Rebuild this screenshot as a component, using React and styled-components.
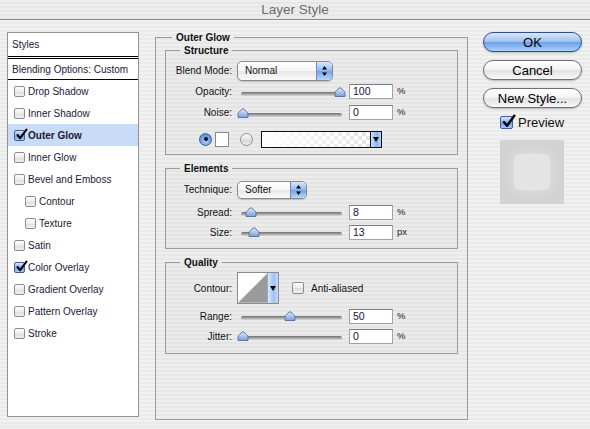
import React from "react";
import styled, { createGlobalStyle, css } from "styled-components";

const GlobalStyle = createGlobalStyle`
  html, body { margin: 0; padding: 0; }
  body {
    width: 590px;
    height: 429px;
    overflow: hidden;
    font-family: "Liberation Sans", Arial, sans-serif;
    font-size: 10px;
    color: #141420;
    background: repeating-linear-gradient(
      to bottom,
      #f1f1f1 0px,
      #f1f1f1 2px,
      #eaeaea 2px,
      #eaeaea 4px
    );
  }
`;

const styleItems = [
  { label: "Drop Shadow" },
  { label: "Inner Shadow" },
  { label: "Outer Glow", checked: true, active: true },
  { label: "Inner Glow" },
  { label: "Bevel and Emboss" },
  { label: "Contour", indent: 1 },
  { label: "Texture", indent: 1 },
  { label: "Satin" },
  { label: "Color Overlay", checked: true },
  { label: "Gradient Overlay" },
  { label: "Pattern Overlay" },
  { label: "Stroke" },
];

const Window = styled.div`
  width: 590px;
  height: 429px;
  display: flex;
  flex-direction: column;
`;

const TitleBar = styled.div`
  height: 19px;
  line-height: 19px;
  border-bottom: 1px solid #8e8e8e;
  text-align: center;
  font-size: 13.5px;
  color: #6c6c6c;
  background: repeating-linear-gradient(
    to bottom,
    #ededed 0px,
    #ededed 2px,
    #e6e6e6 2px,
    #e6e6e6 4px
  );
`;

const Content = styled.div`
  display: flex;
  align-items: flex-start;
`;

/* ---------- left styles list ---------- */

const StylesPanel = styled.div`
  box-sizing: border-box;
  margin: 12px 0 0 7px;
  width: 132px;
  height: 385px;
  border: 1px solid #939393;
  background: #fff;
  color: #1a1a36;
`;

const PanelHeader = styled.div`
  display: flex;
  align-items: center;
  padding-left: 4px;
  height: ${(p) => p.$h}px;
  border-bottom: ${(p) => (p.$double ? "3px double #000" : "1px solid #000")};
`;

const StyleRow = styled.div`
  display: flex;
  align-items: center;
  gap: 3px;
  height: 22px;
  padding-left: ${(p) => 6 + (p.$indent || 0) * 11}px;
  background: ${(p) => (p.$active ? "#c9dcf7" : "transparent")};
  font-weight: ${(p) => (p.$active ? "bold" : "normal")};
`;

const checkedBox = css`
  border-color: #3f5d97;
  background: linear-gradient(#d8e6fb, #8fb3ec 50%, #6b9be6 51%, #a9cdf7);
`;

const CheckBox = styled.span`
  position: relative;
  box-sizing: border-box;
  flex: none;
  width: ${(p) => p.$size || 11}px;
  height: ${(p) => p.$size || 11}px;
  border: 1px solid #8c8c8c;
  border-radius: 2px;
  background: linear-gradient(#fdfdfd, #ececec 50%, #dadada 51%, #f3f3f3);
  ${(p) => p.$checked && checkedBox}

  svg {
    position: absolute;
    left: 0px;
    top: -3px;
  }
`;

const Check = ({ size = 11 }) => (
  <svg width={size + 2} height={size + 2} viewBox="0 0 13 13">
    <path
      d="M2.5 7 L5.2 10.2 L11.5 1.5"
      fill="none"
      stroke="#000"
      strokeWidth="2.1"
      strokeLinecap="round"
      strokeLinejoin="round"
    />
  </svg>
);

/* ---------- group boxes ---------- */

const GroupBox = styled.fieldset`
  box-sizing: border-box;
  min-width: 0;
  margin: ${(p) => p.$mt || 0}px 0 0 ${(p) => p.$ml || 0}px;
  padding: ${(p) => p.$pt || 0}px ${(p) => p.$px || 0}px 0;
  width: ${(p) => (p.$w ? `${p.$w}px` : "auto")};
  height: ${(p) => p.$h}px;
  border: 1px solid #9b9b9b;
  background: rgba(0, 0, 0, 0.012);
`;

const Legend = styled.legend`
  margin-left: ${(p) => p.$ml}px;
  padding: 0 4px;
  line-height: 13px;
  font-size: 10px;
  font-weight: bold;
  color: #111;
`;

const Row = styled.div`
  display: flex;
  align-items: center;
  height: ${(p) => p.$h}px;
  margin-top: ${(p) => p.$mt || 0}px;
  padding-left: ${(p) => p.$pl || 0}px;
`;

const Label = styled.span`
  width: 66px;
  flex: none;
  text-align: right;
  margin-right: 5px;
  color: #111;
`;

/* ---------- popups ---------- */

const Popup = styled.div`
  box-sizing: border-box;
  display: flex;
  align-items: stretch;
  width: ${(p) => p.$w}px;
  height: ${(p) => p.$h}px;
  border: 1px solid #8a8a8a;
  border-radius: 5px;
  overflow: hidden;
  background: linear-gradient(#ffffff, #f5f5f5 50%, #e7e7e7 51%, #fbfbfb);
  box-shadow: 0 1px 1px rgba(0, 0, 0, 0.18);
`;

const PopupText = styled.span`
  flex: 1;
  display: flex;
  align-items: center;
  padding-left: 7px;
  color: #111;
`;

const Stepper = styled.span`
  width: 15px;
  display: flex;
  align-items: center;
  justify-content: center;
  border-left: 1px solid #6f8bbd;
  background: linear-gradient(#d6e5fb, #93b8ee 50%, #74a2e8 51%, #b6d6fb);
`;

const UpDown = () => (
  <svg width="5" height="10" viewBox="0 0 5 10">
    <path d="M2.5 0 L5 3.5 H0 Z M2.5 10 L5 6.5 H0 Z" fill="#000" />
  </svg>
);

/* ---------- sliders ---------- */

const SliderWrap = styled.div`
  position: relative;
  width: 101px;
  height: 10px;
  margin-left: 4px;
  flex: none;
`;

const Track = styled.div`
  position: absolute;
  left: 0;
  right: 0;
  top: 5px;
  height: 4px;
  border-radius: 2px;
  background: linear-gradient(#6e6e6e, #a9a9a9 55%, #d8d8d8);
`;

const Thumb = styled.svg`
  position: absolute;
  top: 0px;
  margin-left: -6px;
`;

const ThumbIcon = ({ pos }) => (
  <Thumb width="12" height="10" viewBox="0 0 12 10" style={{ left: 2 + pos * 97 }}>
    <defs>
      <linearGradient id="tg" x1="0" y1="0" x2="0" y2="1">
        <stop offset="0" stopColor="#e3ecfb" />
        <stop offset="0.55" stopColor="#a7c1ec" />
        <stop offset="1" stopColor="#7a9dd9" />
      </linearGradient>
    </defs>
    <path
      d="M1 9.5 V6 Q1 4.5 2.5 3.5 L5 1.2 Q6 0.4 7 1.2 L9.5 3.5 Q11 4.5 11 6 V9.5 Z"
      fill="url(#tg)"
      stroke="#5d76a6"
      strokeWidth="1"
    />
  </Thumb>
);

const NumberBox = styled.div`
  box-sizing: border-box;
  width: 44px;
  height: 15px;
  margin-left: ${(p) => p.$ml || 7}px;
  padding-left: 3px;
  line-height: 13px;
  border: 1px solid #a2a2a2;
  border-top-color: #7d7d7d;
  background: #fff;
  font-size: 10.5px;
  color: #15153a;
`;

const Unit = styled.span`
  margin-left: 4px;
  font-size: 9.5px;
  color: #222;
  align-self: flex-start;
  margin-top: 4px;
`;

const SliderRow = ({ label, pos, value, unit }) => (
  <>
    <Label>{label}</Label>
    <SliderWrap>
      <Track />
      <ThumbIcon pos={pos} />
    </SliderWrap>
    <NumberBox>{value}</NumberBox>
    <Unit>{unit}</Unit>
  </>
);

/* ---------- color controls ---------- */

const Radio = styled.span`
  position: relative;
  box-sizing: border-box;
  width: 13px;
  height: 13px;
  flex: none;
  margin-left: ${(p) => p.$ml || 0}px;
  border-radius: 50%;
  border: 1px solid ${(p) => (p.$on ? "#3e5d98" : "#8f8f8f")};
  background: ${(p) =>
    p.$on
      ? "radial-gradient(circle at 50% 70%, #a8cdf8, #6a9be4 60%, #4b79c6)"
      : "linear-gradient(#f7f7f7, #e4e4e4 50%, #d2d2d2 51%, #f0f0f0)"};

  &::after {
    content: "";
    display: ${(p) => (p.$on ? "block" : "none")};
    position: absolute;
    left: 3.5px;
    top: 3.5px;
    width: 4px;
    height: 4px;
    border-radius: 50%;
    background: #111;
  }
`;

const ColorSwatch = styled.span`
  box-sizing: border-box;
  width: 14px;
  height: 15px;
  margin-left: 3px;
  border: 1px solid #8a8a8a;
  background: #fff;
`;

const GradientBox = styled.div`
  box-sizing: border-box;
  display: flex;
  margin-left: 8px;
  width: 121px;
  height: 17px;
  border: 1px solid #111;
`;

const GradientFill = styled.div`
  flex: 1;
  background-color: #fff;
  background-image: linear-gradient(to right, #fff 0%, rgba(255, 255, 255, 0) 100%),
    linear-gradient(45deg, #e4e4e4 25%, transparent 25%, transparent 75%, #e4e4e4 75%),
    linear-gradient(45deg, #e4e4e4 25%, transparent 25%, transparent 75%, #e4e4e4 75%);
  background-size: 100% 100%, 8px 8px, 8px 8px;
  background-position: 0 0, 0 0, 4px 4px;
`;

const ArrowButton = styled.div`
  width: 10px;
  display: flex;
  align-items: center;
  justify-content: center;
  border-left: 1px solid #111;
  background: linear-gradient(to right, #cfe0fa, #8db4ee 60%, #b5d3fb);
`;

const DownArrow = () => (
  <svg width="6" height="5" viewBox="0 0 6 5">
    <path d="M0 0 H6 L3 5 Z" fill="#000" />
  </svg>
);

/* ---------- contour ---------- */

const ContourBox = styled.div`
  box-sizing: border-box;
  display: flex;
  width: 42px;
  height: 32px;
  border: 1px solid #8c8c8c;
  background: #fff;
`;

const ContourArrow = styled.div`
  width: 10px;
  display: flex;
  align-items: center;
  justify-content: center;
  border-left: 1px solid #9aa9c4;
  background: linear-gradient(to right, #d9e7fb, #9fc0f1 60%, #c6defc);
`;

const AntiAlias = styled.label`
  display: flex;
  align-items: center;
  gap: 7px;
  margin-left: 13px;
  color: #111;
`;

/* ---------- right column ---------- */

const RightColumn = styled.div`
  display: flex;
  flex-direction: column;
  margin: 12px 0 0 15px;
  width: 99px;
`;

const Button = styled.div`
  box-sizing: border-box;
  height: 20px;
  margin-bottom: 8px;
  border-radius: 10px;
  display: flex;
  align-items: center;
  justify-content: center;
  font-size: 13px;
  color: #000;
  border: 1px solid ${(p) => (p.$primary ? "#2f4f8c" : "#6f6f6f")};
  background: ${(p) =>
    p.$primary
      ? "linear-gradient(#dbe8fb, #9cc0f1 48%, #6c9fe8 52%, #a8d0fb)"
      : "linear-gradient(#ffffff, #f3f3f3 48%, #e2e2e2 52%, #f8f8f8)"};
  box-shadow: 0 1px 2px rgba(0, 0, 0, 0.25);
`;

const PreviewToggle = styled.div`
  display: flex;
  align-items: center;
  gap: 5px;
  margin: -1px 0 0 17px;
  font-size: 13px;
  color: #111;
`;

const PreviewSwatch = styled.div`
  margin: 10px 0 0 17px;
  width: 64px;
  height: 64px;
  display: flex;
  align-items: center;
  justify-content: center;
  background: #d3d3d3;
`;

const PreviewInner = styled.div`
  width: 36px;
  height: 36px;
  border-radius: 6px;
  background: #e4e4e4;
  box-shadow: 0 0 6px 2px #dedede;
`;

export default function App() {
  return (
    <Window>
      <GlobalStyle />
      <TitleBar>Layer Style</TitleBar>
      <Content>
        <StylesPanel>
          <PanelHeader $h={23} $double>Styles</PanelHeader>
          <PanelHeader $h={20}>Blending Options: Custom</PanelHeader>
          {styleItems.map((item) => (
            <StyleRow key={item.label} $indent={item.indent} $active={item.active}>
              <CheckBox $checked={item.checked}>{item.checked && <Check />}</CheckBox>
              {item.label}
            </StyleRow>
          ))}
        </StylesPanel>

        <GroupBox $mt={11} $ml={16} $w={313} $h={389} $px={9}>
          <Legend $ml={7}>Outer Glow</Legend>

          <GroupBox $h={111} $pt={3}>
            <Legend $ml={14}>Structure</Legend>
            <Row $h={21}>
              <Label>Blend Mode:</Label>
              <Popup $w={96} $h={20}>
                <PopupText>Normal</PopupText>
                <Stepper>
                  <UpDown />
                </Stepper>
              </Popup>
            </Row>
            <Row $h={21}>
              <SliderRow label="Opacity:" pos={1} value="100" unit="%" />
            </Row>
            <Row $h={21}>
              <SliderRow label="Noise:" pos={0} value="0" unit="%" />
            </Row>
            <Row $h={20} $mt={6} $pl={33}>
              <Radio $on />
              <ColorSwatch />
              <Radio $ml={11} />
              <GradientBox>
                <GradientFill />
                <ArrowButton>
                  <DownArrow />
                </ArrowButton>
              </GradientBox>
            </Row>
          </GroupBox>

          <GroupBox $mt={7} $h={87} $pt={5}>
            <Legend $ml={14}>Elements</Legend>
            <Row $h={19}>
              <Label>Technique:</Label>
              <Popup $w={70} $h={18}>
                <PopupText>Softer</PopupText>
                <Stepper>
                  <UpDown />
                </Stepper>
              </Popup>
            </Row>
            <Row $h={20} $mt={3}>
              <SliderRow label="Spread:" pos={0.08} value="8" unit="%" />
            </Row>
            <Row $h={20}>
              <SliderRow label="Size:" pos={0.11} value="13" unit="px" />
            </Row>
          </GroupBox>

          <GroupBox $mt={7} $h={98} $pt={3}>
            <Legend $ml={14}>Quality</Legend>
            <Row $h={32}>
              <Label>Contour:</Label>
              <ContourBox>
                <svg width="30" height="30" viewBox="0 0 30 30">
                  <path d="M0 30 L30 0 V30 Z" fill="#9b9b9b" />
                </svg>
                <ContourArrow>
                  <DownArrow />
                </ContourArrow>
              </ContourBox>
              <AntiAlias>
                <CheckBox $size={12} />
                Anti-aliased
              </AntiAlias>
            </Row>
            <Row $h={20} $mt={2}>
              <SliderRow label="Range:" pos={0.48} value="50" unit="%" />
            </Row>
            <Row $h={20}>
              <SliderRow label="Jitter:" pos={0} value="0" unit="%" />
            </Row>
          </GroupBox>
        </GroupBox>

        <RightColumn>
          <Button $primary>OK</Button>
          <Button>Cancel</Button>
          <Button>New Style...</Button>
          <PreviewToggle>
            <CheckBox $size={13} $checked>
              <Check size={13} />
            </CheckBox>
            Preview
          </PreviewToggle>
          <PreviewSwatch>
            <PreviewInner />
          </PreviewSwatch>
        </RightColumn>
      </Content>
    </Window>
  );
}
